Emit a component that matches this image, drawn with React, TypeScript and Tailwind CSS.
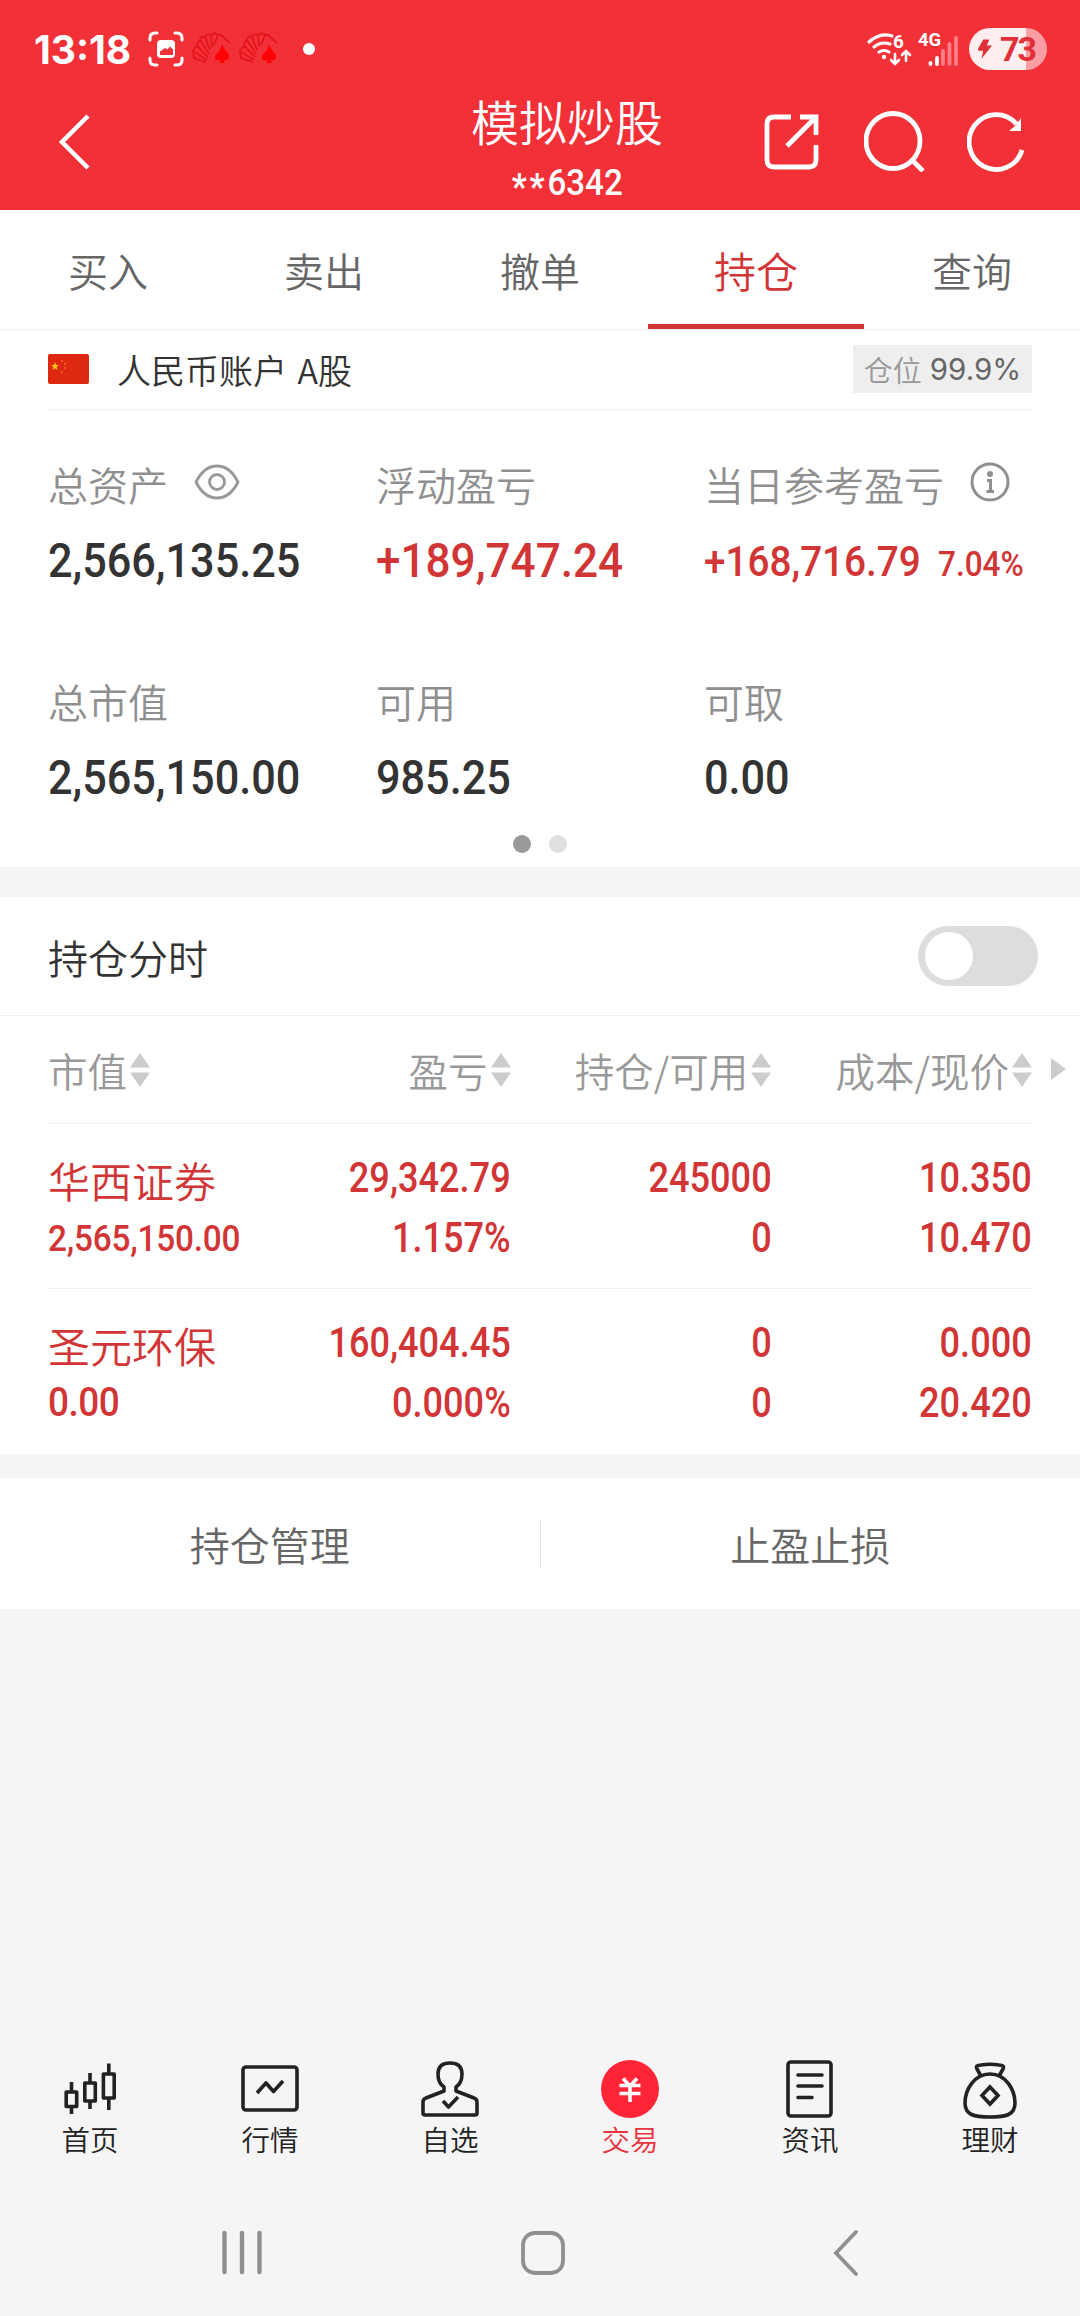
import React from 'react';

interface SummaryCellProps {
  label: string;
  icon?: React.ReactNode;
  children: React.ReactNode;
}

interface Holding {
  name: string;
  value: string;
  valueClass: string;
  profit: string;
  rate: string;
  amount: string;
  available: string;
  cost: string;
  price: string;
}

const App = () => (
  <div className="flex h-[2316px] w-[1080px] flex-col overflow-hidden bg-[#f5f5f5] font-['Noto_Sans_CJK_SC',sans-serif] text-[40px] font-[350] leading-none text-[#333]">
    {/* Header */}
    <header className="h-[210px] bg-[#f23037] text-white">
      <StatusBar />
      <div className="grid h-[112px] grid-cols-[447px_240px_393px]">
        <div className="pl-[58px] pt-[16px]">
          <svg width="34" height="56" viewBox="0 0 34 56" fill="none" stroke="currentColor" strokeWidth="4.5">
            <path d="M30 2 4 28 30 54" />
          </svg>
        </div>
        <div className="flex flex-col items-center">
          <h1 className="mt-[-3px] text-[48px] leading-[50px]">模拟炒股</h1>
          <div className="mt-[20px] flex origin-center scale-x-[0.92] font-['Roboto'] text-[36px] font-medium leading-[36px]">
            <span className="pt-[4px] font-bold tracking-[3px]">**</span>6342
          </div>
        </div>
        <div className="flex pl-[75px] pt-[12px]">
          <svg width="60" height="62" viewBox="0 0 60 62" fill="none" stroke="currentColor" strokeWidth="4.8">
            <path d="M29 7H12Q5 7 5 14V50Q5 57 12 57H47Q54 57 54 50V35M38 7H54V25M54 7 25 36" />
          </svg>
          <svg className="ml-[42px]" width="62" height="62" viewBox="0 0 62 62" fill="none" stroke="currentColor" strokeWidth="4.8">
            <ellipse cx="29" cy="31" rx="27" ry="27.5" />
            <path d="M48 50 59 61" />
          </svg>
          <svg className="ml-[41px]" width="62" height="64" viewBox="0 0 62 64" fill="none" stroke="currentColor" strokeWidth="4.8">
            <path d="M55 40A27 27.5 0 1 1 49.500 14" />
            <path d="M54 8V21H42L48 16Z" fill="currentColor" stroke="none" />
          </svg>
        </div>
      </div>
    </header>

    {/* Trade tabs */}
    <nav className="flex h-[120px] border-b border-[#eee] bg-white text-[#666]">
      {tabs.map((tab) => (
        <div
          key={tab}
          className={
            tab === '持仓'
              ? 'flex w-[216px] items-center justify-center border-b-[5px] border-[#d13535] pt-[6px] text-[42px] text-[#d13535]'
              : 'flex w-[216px] items-center justify-center'
          }
        >
          {tab}
        </div>
      ))}
    </nav>

    {/* Account summary */}
    <section className="h-[537px] bg-white px-[48px]">
      <div className="flex h-[80px] items-center border-b border-[#eee]">
        <Flag />
        <div className="ml-[28px] text-[34px] [word-spacing:3px]">人民币账户 A股</div>
        <div className="ml-auto mt-[-1px] flex h-[48px] w-[179px] items-center justify-center gap-[8px] bg-[#eee] text-[29px] text-[#999]">
          仓位<span className="mt-[2px] font-['Inter'] text-[29.500px] font-normal text-[#666]">99.9%</span>
        </div>
      </div>
      <div className="grid grid-cols-3 gap-y-[100px] pt-[56px]">
        <SummaryCell label="总资产" icon={<EyeIcon />}>
          <Num className="text-[48px]">2,566,135.25</Num>
        </SummaryCell>
        <SummaryCell label="浮动盈亏">
          <Num className="text-[49px] text-[#d13535]">+189,747.24</Num>
        </SummaryCell>
        <SummaryCell label="当日参考盈亏" icon={<InfoIcon />}>
          <Num className="text-[43px] text-[#d13535]">+168,716.79</Num>
          <Num className="ml-[-7px] text-[35px] text-[#d13535]">7.04%</Num>
        </SummaryCell>
        <SummaryCell label="总市值">
          <Num className="text-[48px]">2,565,150.00</Num>
        </SummaryCell>
        <SummaryCell label="可用">
          <Num className="text-[48px]">985.25</Num>
        </SummaryCell>
        <SummaryCell label="可取">
          <Num className="text-[48px]">0.00</Num>
        </SummaryCell>
      </div>
      <div className="mt-[35px] flex justify-center gap-[18px]">
        <span className="size-[18px] rounded-full bg-[#999]" />
        <span className="size-[18px] rounded-full bg-[#e0e0e0]" />
      </div>
    </section>

    {/* Holdings */}
    <section className="mt-[30px] h-[557px] bg-white">
      <div className="flex h-[119px] items-center justify-between border-b border-[#eee] pl-[48px] pr-[42px]">
        <span className="pt-[2px]">持仓分时</span>
        <div className="flex h-[60px] w-[120px] items-center rounded-full bg-[#ddd] px-[7px]">
          <span className="size-[48px] rounded-full bg-white" />
        </div>
      </div>
      <div className="flex h-[108px] pl-[48px]">
        <div className="flex w-[984px] items-center border-b border-[#eee] text-[39.500px] text-[#999]">
          <SortHead className="w-[183px]" label="市值" />
          <SortHead className="w-[280px] justify-end" label="盈亏" />
          <SortHead className="w-[261px] justify-end" label="持仓/可用" />
          <SortHead className="w-[261px] justify-end" label="成本/现价" />
        </div>
        <svg className="ml-[19px] mt-[42px]" width="15" height="22" viewBox="0 0 15 22" fill="#ccc">
          <path d="M0 0 15 11 0 22Z" />
        </svg>
      </div>
      {holdings.map((item) => (
        <HoldingRow key={item.name} {...item} />
      ))}
    </section>

    {/* Actions */}
    <section className="mt-[24px] flex h-[131px] items-center bg-white text-[#666]">
      <span className="flex-1 pt-[1px] text-center">持仓管理</span>
      <span className="h-[48px] w-px bg-[#e6e6e6]" />
      <span className="flex-1 pt-[1px] text-center">止盈止损</span>
    </section>

    {/* Bottom bar */}
    <nav className="mt-auto flex h-[120px] text-[28.500px] text-[#222]">
      {menu.map((item) => (
        <div
          key={item.label}
          className={
            item.label === '交易'
              ? 'flex w-[180px] flex-col items-center text-[#e93340]'
              : 'flex w-[180px] flex-col items-center'
          }
        >
          <svg width="64" height="64" viewBox="0 0 64 64" fill="none" stroke="currentColor" strokeWidth="3.6" strokeLinejoin="round">
            {item.icon}
          </svg>
          <span className="mt-[5px]">{item.label}</span>
        </div>
      ))}
    </nav>

    {/* System keys */}
    <footer className="flex h-[140px] justify-between px-[220px] pt-[52px] text-[#909090]">
      <svg width="44" height="50" viewBox="0 0 44 50" fill="none" stroke="currentColor" strokeWidth="4.4" strokeLinecap="round">
        <path d="M4.500 5V44M22 5V44M39.500 5V44" />
      </svg>
      <svg className="ml-[-5px]" width="48" height="50" viewBox="0 0 48 50" fill="none" stroke="currentColor" strokeWidth="3.8">
        <rect x="4" y="5" width="40" height="40" rx="12" />
      </svg>
      <svg className="mr-[-1px]" width="34" height="50" viewBox="0 0 34 50" fill="none" stroke="currentColor" strokeWidth="3.8" strokeLinecap="round">
        <path d="M29 4 9 25 29 46" />
      </svg>
    </footer>
  </div>
);

const StatusBar = () => (
  <div className="flex h-[98px] items-center pl-[34px] pr-[33px] font-['Inter',sans-serif]">
    <span className="text-[39px] font-bold">13:18</span>
    <svg className="ml-[17px]" width="36" height="36" viewBox="0 0 36 36" fill="none" stroke="currentColor" strokeWidth="3" strokeLinecap="round">
      <path d="M2 9V7Q2 2 7 2H9M27 2H29Q34 2 34 7V9M34 27V29Q34 34 29 34H27M9 34H7Q2 34 2 29V27" />
      <rect x="9" y="9" width="18" height="18" rx="4" fill="currentColor" stroke="none" />
      <path d="M12 24V20.500L17 17 19.500 18.500 22 15.500 25 18.500V24Z" fill="#f23037" stroke="none" />
    </svg>
    <Fan className="ml-[8px]" />
    <Fan className="ml-[7px]" />
    <span className="ml-[24px] size-[12px] rounded-full bg-white" />
    <svg className="ml-auto" width="46" height="38" viewBox="0 0 46 38" fill="none" stroke="currentColor" strokeWidth="3.2" strokeLinecap="round">
      <path d="M3 12Q14 2 26 6M8 17Q15 11 24 14M13 22Q18 19 23 22" />
      <circle cx="18" cy="27" r="2.2" fill="currentColor" stroke="none" />
      <path d="M29 24V33M25 30 29 34 33 30M40 31V22M36 25 40 21 44 25" strokeWidth="2.6" />
      <text x="27" y="18" fill="currentColor" stroke="none" fontFamily="Roboto" fontSize="19" fontWeight="700">6</text>
    </svg>
    <svg className="ml-[6px]" width="42" height="46" viewBox="0 -4 42 46" fill="none" stroke="currentColor" strokeWidth="3.8" strokeLinecap="round">
      <text x="0" y="16" fill="currentColor" stroke="none" fontFamily="Roboto" fontSize="18.5" fontWeight="700">4G</text>
      <path d="M12.500 33V34M19 28V34" />
      <path d="M25 21V34M31.500 14V34M38 8V34" stroke="#ff7f86" />
    </svg>
    <div className="ml-[9px] flex h-[42px] w-[78px] items-center rounded-full bg-linear-to-r from-[#ffeeef] from-73% to-[#fb9ea3] to-73% pl-[9px] text-[#e0303a]">
      <svg width="14" height="22" viewBox="0 0 16 22" fill="currentColor">
        <path d="M6 0H13L10 7H16L4 22 6 13H1Q-1 12 1 9Z" />
      </svg>
      <span className="ml-[8px] font-['Roboto'] text-[34px] font-bold tracking-[-2px]">73</span>
    </div>
  </div>
);

const Fan = ({ className }: { className: string }) => (
  <svg className={className} width="40" height="34" viewBox="0 0 40 34" fill="none" stroke="#e5141b" strokeWidth="1.8">
    <path d="M14 30 2 26 1 19Q3 14 6 15 4 10 8 8 9 3 13 5 15 1 19 3 22 0 26 3 29 2 31 5L38 11M15 28 1 19M16 25 6 15M17 22 8 8M18 18 13 5M20 15 19 3M22 13 26 3" />
    <path d="M30 12Q32 18 36 21 39 26 35 28 32 29 31 27L33 31H27L29 27Q27 29 24 28 21 25 25 21 29 18 30 12Z" fill="#ff0005" stroke="none" />
  </svg>
);

const Flag = () => (
  <svg className="mt-[-1px]" width="41" height="30" viewBox="0 0 41 30">
    <rect width="41" height="30" rx="2" fill="#de2910" />
    <path d="M7 8 8 11H11L8.600 13 9.500 16 7 14.200 4.500 16 5.400 13 3 11H6Z" fill="#ffc61a" />
    <g fill="#f06a1c">
      <circle cx="14" cy="7" r="1" />
      <circle cx="17" cy="10" r="1" />
      <circle cx="17" cy="14" r="1" />
      <circle cx="14" cy="18" r="1" />
    </g>
  </svg>
);

const EyeIcon = () => (
  <svg className="ml-[26px] mt-[-8px]" width="46" height="36" viewBox="0 0 46 36" fill="none" stroke="#999" strokeWidth="2.8">
    <path d="M2 18Q10 2 23 2T44 18Q36 34 23 34T2 18Z" />
    <circle cx="23" cy="18" r="7.5" />
  </svg>
);

const InfoIcon = () => (
  <svg className="ml-[26px] mt-[-8px]" width="40" height="40" viewBox="0 0 40 40" fill="none" stroke="#8f8f8f" strokeWidth="3">
    <circle cx="20" cy="20" r="18" />
    <circle cx="20" cy="12" r="3" fill="#8f8f8f" stroke="none" />
    <path d="M17 18.500H20.500V29.500M16.500 29.500H24" />
  </svg>
);

const Num = ({ className = '', children }: { className?: string; children: React.ReactNode }) => (
  <span className={`inline-block origin-left scale-x-[0.9] font-['Roboto'] font-medium ${className}`}>{children}</span>
);

const SummaryCell = ({ label, icon, children }: SummaryCellProps) => (
  <div className="h-[117px] whitespace-nowrap">
    <div className="flex h-[40px] items-center text-[#8f8f8f]">
      <span className="mt-[-4px]">{label}</span>
      {icon}
    </div>
    <div className="mt-[31px] flex h-[48px] items-baseline leading-[48px]">{children}</div>
  </div>
);

const SortHead = ({ className, label }: { className: string; label: string }) => (
  <div className={`flex items-center ${className}`}>
    <span>{label}</span>
    <svg className="ml-[3px] mt-px" width="20" height="34" viewBox="0 0 20 34" fill="#ccc">
      <path d="M10 0 20 14.500H0ZM0 19.500H20L10 34Z" />
    </svg>
  </div>
);

const HoldingRow = ({ name, value, valueClass, profit, rate, amount, available, cost, price }: Holding) => (
  <div className="mx-[48px] flex h-[165px] border-b border-[#eee] text-[42px] text-[#d13535] last:border-b-0">
    <div className="w-[203px] pt-[35px]">
      <div className="h-[53px]">{name}</div>
      <Num className={valueClass}>{value}</Num>
    </div>
    <NumPair className="w-[260px]" top={profit} bottom={rate} />
    <NumPair className="w-[261px]" top={amount} bottom={available} />
    <NumPair className="w-[261px]" top={cost} bottom={price} />
  </div>
);

const NumPair = ({ className, top, bottom }: { className: string; top: string; bottom: string }) => (
  <div className={`origin-right scale-x-[0.86] pt-[24px] text-right font-['Roboto'] font-medium leading-[60px] ${className}`}>
    <div>{top}</div>
    <div>{bottom}</div>
  </div>
);

const tabs = ['买入', '卖出', '撤单', '持仓', '查询'];

const holdings: Holding[] = [
  {
    name: '华西证券',
    value: '2,565,150.00',
    valueClass: 'text-[37px] tracking-[-0.2px]',
    profit: '29,342.79',
    rate: '1.157%',
    amount: '245000',
    available: '0',
    cost: '10.350',
    price: '10.470',
  },
  {
    name: '圣元环保',
    value: '0.00',
    valueClass: 'text-[41px] tracking-[-0.5px]',
    profit: '160,404.45',
    rate: '0.000%',
    amount: '0',
    available: '0',
    cost: '0.000',
    price: '20.420',
  },
];

const menu = [
  {
    label: '首页',
    icon: (
      <path d="M8.200 36H18.700V50.500H8.200ZM13.500 26V35M13.500 51V58M26.800 27H37.300V45H26.800ZM32 17V26M32 46V53M45.400 18H56.200V42H45.400ZM50.800 7.500V17M50.800 43V54" />
    ),
  },
  {
    label: '行情',
    icon: (
      <>
        <rect x="5" y="11" width="54" height="43" rx="3" />
        <path d="M19 37 28 27 35.500 35.500 45 25" />
      </>
    ),
  },
  {
    label: '自选',
    icon: (
      <>
        <path d="M26 31V35L8 42Q5 43 5 46V57Q5 59 7 59H57Q59 59 59 57V46Q59 43 56 42L38 35V31Q44 27 44 18 44 7 32 7T20 18Q20 27 26 31V35" />
        <path d="M25 45 30.500 51 40 41" />
      </>
    ),
  },
  {
    label: '交易',
    icon: (
      <>
        <circle cx="32" cy="33" r="29" fill="#ff2436" stroke="none" />
        <path d="M25 22.500 32 30 39 22.500M21.500 29.500H42.500M21.500 37.500H42.500M32 30V46" stroke="#fff" />
      </>
    ),
  },
  {
    label: '资讯',
    icon: (
      <>
        <rect x="10" y="6" width="43" height="54" rx="3" />
        <path d="M20 19H44M20 30H44M20 41.500H34" strokeLinecap="round" />
      </>
    ),
  },
  {
    label: '理财',
    icon: (
      <>
        <path d="M23 20 19 13Q17 9 23 9 32 7.500 41 9 47 9 45 13L41 20" />
        <path d="M32 18C16 18 7 34 7 47 7 59 16 61 32 61S57 59 57 47C57 34 48 18 32 18Z" />
        <path d="M32 31 40 39.500 32 48 24 39.500Z" strokeLinejoin="miter" />
      </>
    ),
  },
];

export default App;
